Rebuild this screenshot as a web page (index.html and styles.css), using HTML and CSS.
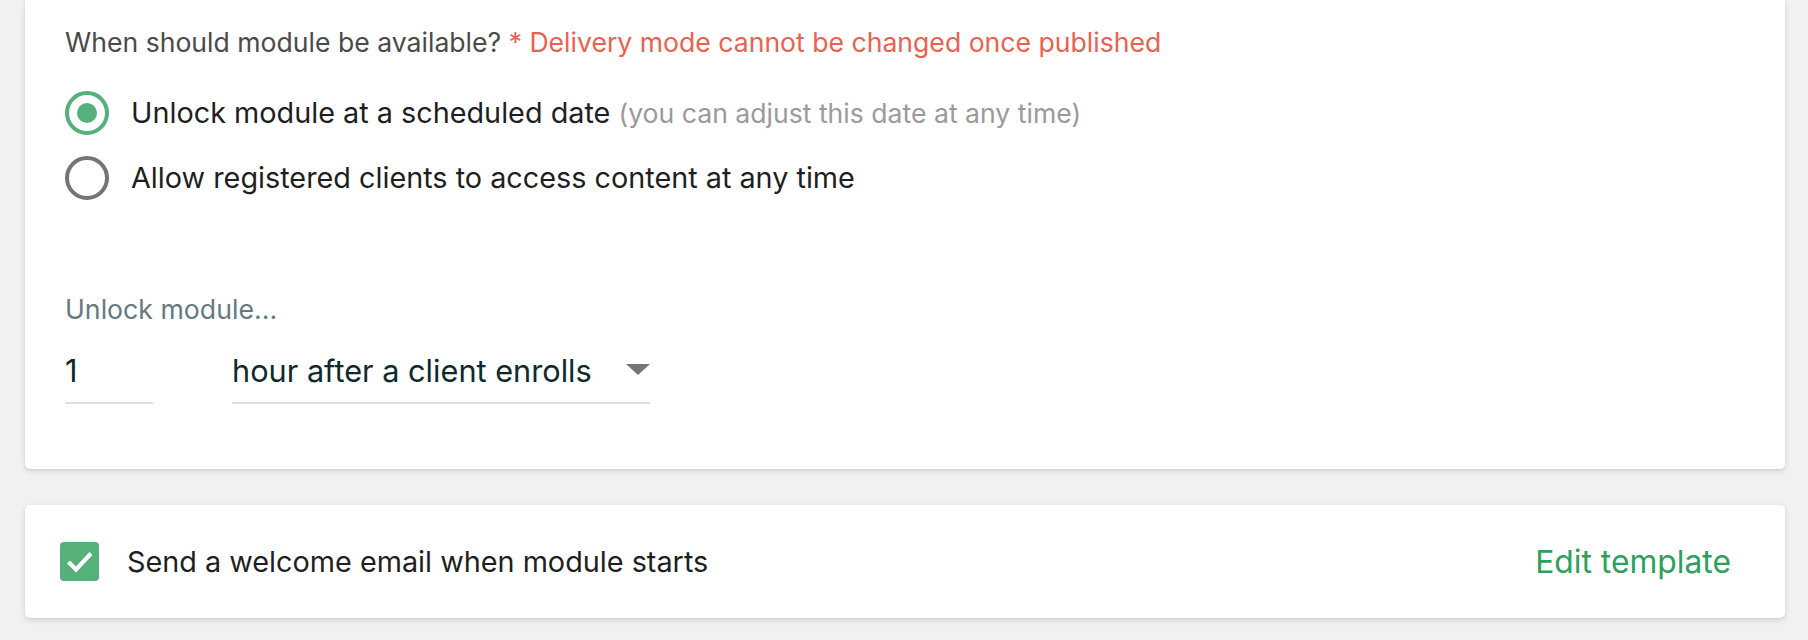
FILE: index.html
```html
<!DOCTYPE html>
<html lang="en">
<head>
<meta charset="utf-8">
<title>Module availability</title>
<link rel="stylesheet" href="styles.css">
</head>
<body>
<div class="page">
  <section class="card schedule">
    <div class="question">When should module be available? <span class="warn">* Delivery mode cannot be changed once published</span></div>
    <div class="options">
      <label class="option">
        <span class="radio checked"><span class="dot"></span></span>
        <span class="opt-text">Unlock module at a scheduled date <span class="hint">(you can adjust this date at any time)</span></span>
      </label>
      <label class="option">
        <span class="radio"></span>
        <span class="opt-text">Allow registered clients to access content at any time</span>
      </label>
    </div>
    <div class="unlock-label">Unlock module...</div>
    <div class="unlock-row">
      <div class="field num">1</div>
      <div class="field select">
        <span>hour after a client enrolls</span>
        <span class="caret"></span>
      </div>
    </div>
  </section>
  <section class="card welcome">
    <div class="check-wrap">
      <span class="checkbox">
        <svg width="39" height="39" viewBox="0 0 39 39"><path d="M8.5 20 L16 27.5 L31 11.5" fill="none" stroke="#fff" stroke-width="4.2" stroke-linecap="butt" stroke-linejoin="miter"/></svg>
      </span>
      <span class="welcome-text">Send a welcome email when module starts</span>
    </div>
    <a class="edit-link">Edit template</a>
  </section>
</div>
</body>
</html>
```
FILE: styles.css
```css
* { box-sizing: border-box; }
html, body { margin: 0; padding: 0; }
body {
  background: #f0f1f3;
  font-family: Inter, "Noto Sans", sans-serif;
  height: 640px;
  overflow: hidden;
}
.page {
  padding: 0 23px 0 25px;
  display: flex;
  flex-direction: column;
  gap: 36px;
}
.card {
  background: #fff;
  border-radius: 0 0 5px 5px;
  box-shadow: 0 2px 6px rgba(0, 0, 0, 0.12), 0 1px 2px rgba(0, 0, 0, 0.06);
}
.schedule {
  padding: 27px 40px 65px;
}
.question {
  font-size: 26.6px;
  line-height: 30px;
  color: #4a4a4a;
}
.warn { color: #eb6150; }
.options {
  margin-top: 34px;
  display: flex;
  flex-direction: column;
  gap: 21px;
}
.option {
  display: flex;
  align-items: center;
  gap: 22px;
  height: 44px;
}
.radio {
  width: 44px;
  height: 44px;
  border-radius: 50%;
  border: 4px solid #757575;
  display: flex;
  align-items: center;
  justify-content: center;
  flex: none;
}
.radio.checked { border-color: #55b07a; }
.radio .dot {
  width: 20px;
  height: 20px;
  border-radius: 50%;
  background: #55b07a;
}
.opt-text {
  font-size: 28.8px;
  line-height: 44px;
  color: #1f1f1f;
}
.hint {
  font-size: 26.6px;
  color: #9a9a9a;
}
.unlock-label {
  margin-top: 94px;
  font-size: 26.7px;
  line-height: 30px;
  color: #667a80;
}
.unlock-row {
  margin-top: 29px;
  display: flex;
  gap: 79px;
}
.field {
  font-size: 30.7px;
  line-height: 36px;
  color: #0e2a2e;
  padding-bottom: 13px;
  border-bottom: 2px solid #e0e0e0;
}
.num { width: 88px; }
.select {
  width: 418px;
  display: flex;
  justify-content: space-between;
  align-items: center;
}
.caret {
  width: 0;
  height: 0;
  border-left: 12px solid transparent;
  border-right: 12px solid transparent;
  border-top: 11px solid #757575;
  margin-top: -4px;
}
.welcome {
  border-radius: 5px;
  height: 113px;
  padding: 0 54px 0 35px;
  display: flex;
  align-items: center;
  justify-content: space-between;
}
.check-wrap {
  display: flex;
  align-items: center;
  gap: 28px;
}
.checkbox {
  width: 39px;
  height: 39px;
  border-radius: 4px;
  background: #55b07a;
  display: block;
}
.checkbox svg { display: block; }
.welcome-text {
  font-size: 28.8px;
  color: #1f1f1f;
}
.edit-link {
  font-size: 31.8px;
  color: #2ea05e;
  cursor: pointer;
}
```
